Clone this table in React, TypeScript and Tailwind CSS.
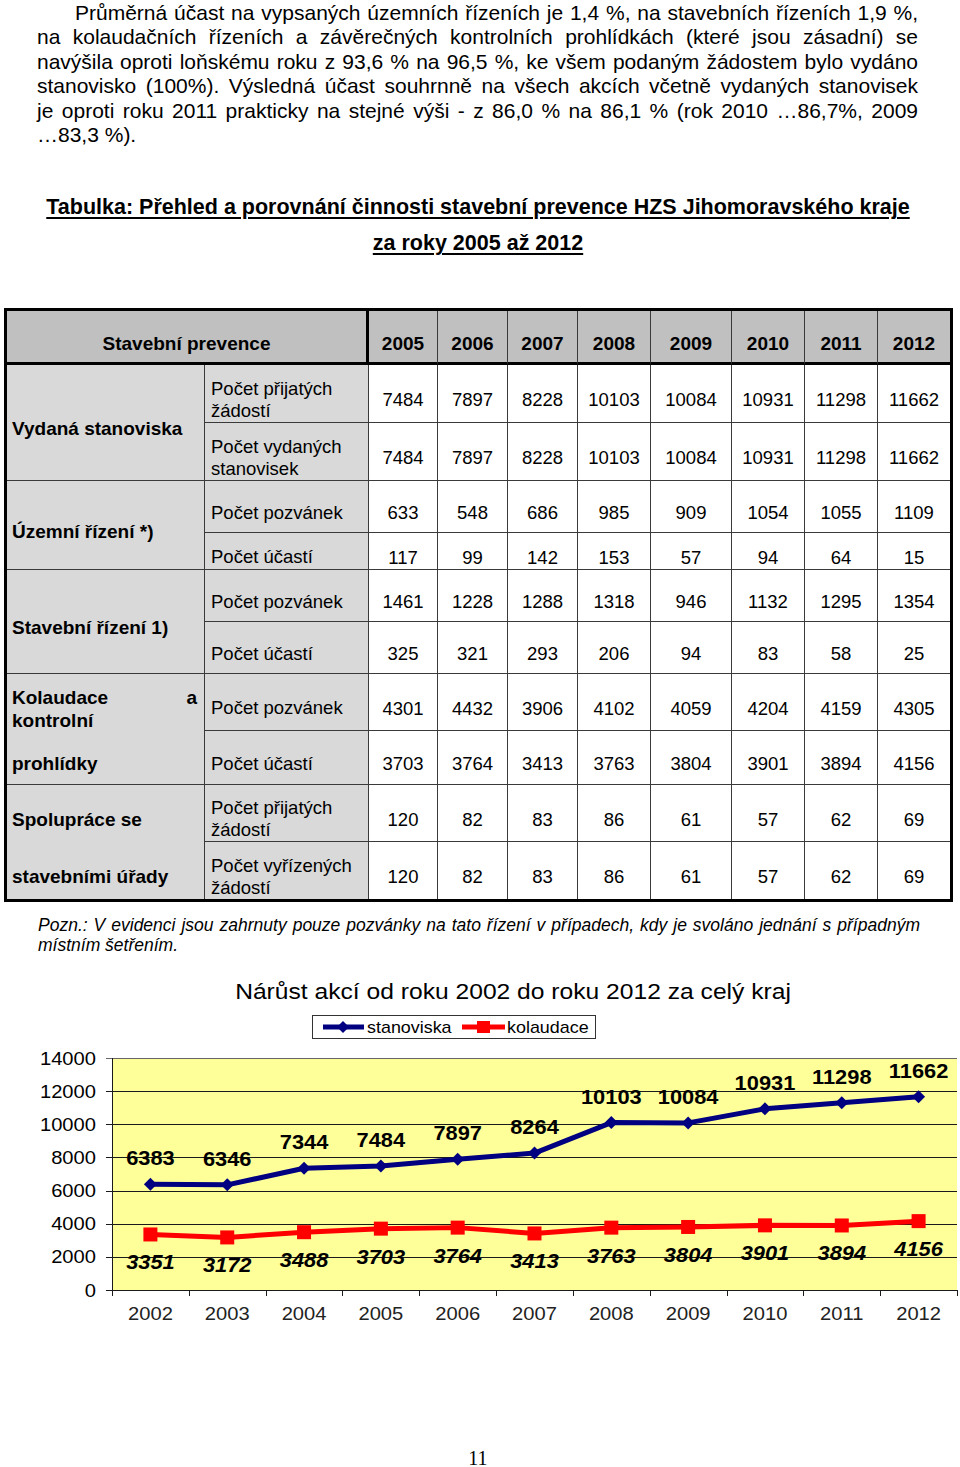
import React from "react";

const years = ["2005", "2006", "2007", "2008", "2009", "2010", "2011", "2012"];

const paraLines = [
  "Průměrná účast na vypsaných územních řízeních je 1,4 %, na stavebních řízeních 1,9 %,",
  "na kolaudačních řízeních a závěrečných kontrolních prohlídkách (které jsou zásadní) se",
  "navýšila oproti loňskému roku z 93,6 % na 96,5 %, ke všem podaným žádostem bylo vydáno",
  "stanovisko (100%). Výsledná účast souhrnně na všech akcích včetně vydaných stanovisek",
  "je oproti roku 2011 prakticky na stejné výši - z 86,0 % na 86,1 % (rok 2010 …86,7%, 2009",
];

type Sub = { s: React.ReactNode; v: string[] };
type Group = { cat: React.ReactNode; split?: [React.ReactNode, React.ReactNode]; subs: Sub[] };

const groups: Group[] = [
  {
    cat: "Vydaná stanoviska",
    subs: [
      { s: <>Počet přijatých<br />žádostí</>, v: ["7484", "7897", "8228", "10103", "10084", "10931", "11298", "11662"] },
      { s: <>Počet vydaných<br />stanovisek</>, v: ["7484", "7897", "8228", "10103", "10084", "10931", "11298", "11662"] },
    ],
  },
  {
    cat: "Územní řízení *)",
    subs: [
      { s: "Počet pozvánek", v: ["633", "548", "686", "985", "909", "1054", "1055", "1109"] },
      { s: "Počet účastí", v: ["117", "99", "142", "153", "57", "94", "64", "15"] },
    ],
  },
  {
    cat: "Stavební řízení 1)",
    subs: [
      { s: "Počet pozvánek", v: ["1461", "1228", "1288", "1318", "946", "1132", "1295", "1354"] },
      { s: "Počet účastí", v: ["325", "321", "293", "206", "94", "83", "58", "25"] },
    ],
  },
  {
    cat: null,
    split: ["Kolaudace a kontrolní", "prohlídky"],
    subs: [
      { s: "Počet pozvánek", v: ["4301", "4432", "3906", "4102", "4059", "4204", "4159", "4305"] },
      { s: "Počet účastí", v: ["3703", "3764", "3413", "3763", "3804", "3901", "3894", "4156"] },
    ],
  },
  {
    cat: null,
    split: ["Spolupráce se", "stavebními úřady"],
    subs: [
      { s: <>Počet přijatých<br />žádostí</>, v: ["120", "82", "83", "86", "61", "57", "62", "69"] },
      { s: <>Počet vyřízených<br />žádostí</>, v: ["120", "82", "83", "86", "61", "57", "62", "69"] },
    ],
  },
];

const stan = [6383, 6346, 7344, 7484, 7897, 8264, 10103, 10084, 10931, 11298, 11662];
const kol = [3351, 3172, 3488, 3703, 3764, 3413, 3763, 3804, 3901, 3894, 4156];
const chartYears = ["2002", "2003", "2004", "2005", "2006", "2007", "2008", "2009", "2010", "2011", "2012"];

const PL = 112;
const PR = 957;
const PB = 1290;
const PT = 1058;
const cw = (PR - PL) / 11;
const xs = (i: number) => PL + cw * (i + 0.5);
const yv = (v: number) => PB - (v * (PB - PT)) / 14000;

function ST({ x, y, size, anchor, weight, italic, fill, children }: { x: number; y: number; size: number; anchor?: "start" | "middle" | "end"; weight?: number; italic?: boolean; fill?: string; children: React.ReactNode }) {
  return (
    <text
      transform={`translate(${x},${y}) scale(1.12,1)`}
      x={0}
      y={0}
      fontSize={size}
      fontFamily="'Liberation Sans', Arial, sans-serif"
      fontWeight={weight ?? 400}
      fontStyle={italic ? "italic" : "normal"}
      textAnchor={anchor ?? "middle"}
      fill={fill ?? "#000"}
    >
      {children}
    </text>
  );
}

function Chart() {
  const stanPts = stan.map((v, i) => `${xs(i)},${yv(v)}`).join(" ");
  const kolPts = kol.map((v, i) => `${xs(i)},${yv(v)}`).join(" ");
  return (
    <svg width={960} height={380} viewBox="0 960 960 380" className="block">
      <ST x={513} y={999} size={22}>Nárůst akcí od roku 2002 do roku 2012 za celý kraj</ST>
      <rect x={312.5} y={1015.5} width={283} height={23} fill="#fff" stroke="#333" strokeWidth={1} />
      <line x1={323} y1={1027} x2={364} y2={1027} stroke="#000080" strokeWidth={5} />
      <polygon points="343,1021 349,1027 343,1033 337,1027" fill="#000080" />
      <ST x={367} y={1033} size={16} anchor="start">stanoviska</ST>
      <line x1={462} y1={1027} x2={505} y2={1027} stroke="#ff0000" strokeWidth={5} />
      <rect x={477} y={1021} width={13} height={12} fill="#ff0000" />
      <ST x={507} y={1033} size={16} anchor="start">kolaudace</ST>
      <rect x={PL} y={PT} width={PR - PL} height={PB - PT} fill="#ffff99" />
      {[0, 2000, 4000, 6000, 8000, 10000, 12000, 14000].map((v) => (
        <g key={v}>
          <line x1={PL - 6} x2={PR} y1={Math.round(yv(v)) + 0.5} y2={Math.round(yv(v)) + 0.5} stroke={v === 14000 ? "#666" : "#1a1a1a"} strokeWidth={1} />
          <ST x={96} y={yv(v) + 6.5} size={18} anchor="end">{v}</ST>
        </g>
      ))}
      <line x1={PL + 0.5} x2={PL + 0.5} y1={PT} y2={PB + 6} stroke="#1a1a1a" strokeWidth={1} />
      {Array.from({ length: 11 }).map((_, i) => (
        <line key={i} x1={Math.round(PL + cw * (i + 1)) + 0.5} x2={Math.round(PL + cw * (i + 1)) + 0.5} y1={PB} y2={PB + 6} stroke="#1a1a1a" strokeWidth={1} />
      ))}
      {chartYears.map((y, i) => (
        <ST key={y} x={xs(i)} y={1319.5} size={18} fill="#222">{y}</ST>
      ))}
      <polyline points={stanPts} fill="none" stroke="#000080" strokeWidth={5} strokeLinejoin="round" />
      {stan.map((v, i) => (
        <polygon key={i} points={`${xs(i)},${yv(v) - 6.5} ${xs(i) + 6.5},${yv(v)} ${xs(i)},${yv(v) + 6.5} ${xs(i) - 6.5},${yv(v)}`} fill="#000080" />
      ))}
      <polyline points={kolPts} fill="none" stroke="#ff0000" strokeWidth={5} strokeLinejoin="round" />
      {kol.map((v, i) => (
        <rect key={i} x={xs(i) - 7} y={yv(v) - 7} width={14} height={14} fill="#ff0000" />
      ))}
      {stan.map((v, i) => (
        <ST key={i} x={xs(i)} y={yv(v) - 19} size={19.5} weight={700}>{v}</ST>
      ))}
      {kol.map((v, i) => (
        <ST key={i} x={xs(i)} y={yv(v) + 35} size={19.5} weight={700} italic>{v}</ST>
      ))}
    </svg>
  );
}

function Table() {
  const cells: React.ReactNode[] = [];
  cells.push(
    <div key="h" className="col-span-2 flex items-center justify-center pt-[14px] bg-[#c0c0c0] border-r-[3px] border-b-[3px] border-black font-bold text-[19px]">
      Stavební prevence
    </div>
  );
  years.forEach((y, i) => {
    cells.push(
      <div key={"y" + y} className={`flex items-center justify-center pt-[14px] bg-[#c0c0c0] border-b-[3px] border-black font-bold text-[19px] ${i < 7 ? "border-r border-r-[#3a3a3a]" : ""}`}>
        {y}
      </div>
    );
  });
  let rowIdx = 0;
  groups.forEach((g, gi) => {
    const lastGroup = gi === groups.length - 1;
    cells.push(
      <div key={"c" + gi} className={`row-span-2 flex flex-col bg-[#d9d9d9] border-r border-[#3a3a3a] font-bold text-[19px] leading-[23px] pl-[5px] pr-[7px] ${lastGroup ? "" : "border-b"}`}>
        {g.split ? (
          <>
            <div className="flex items-center pt-[12px] h-[57px]">
              <div className="w-full text-justify">{g.split[0]}</div>
            </div>
            <div className="flex-1 flex items-center pt-[12px]">
              <div className="w-full">{g.split[1]}</div>
            </div>
          </>
        ) : (
          <div className="flex-1 flex items-center pt-[12px]">{g.cat}</div>
        )}
      </div>
    );
    g.subs.forEach((s, si) => {
      const lastRow = rowIdx === 9;
      cells.push(
        <div key={`s${gi}-${si}`} className={`flex items-center pt-[12px] pl-[6px] bg-[#d9d9d9] border-r border-[#3a3a3a] text-[18.5px] leading-[22px] ${lastRow ? "" : "border-b"}`}>
          <div>{s.s}</div>
        </div>
      );
      s.v.forEach((v, vi) => {
        cells.push(
          <div key={`v${gi}-${si}-${vi}`} className={`flex items-center justify-center pt-[12px] bg-white border-[#3a3a3a] text-[18.5px] ${vi < 7 ? "border-r" : ""} ${lastRow ? "" : "border-b"}`}>
            {v}
          </div>
        );
      });
      rowIdx++;
    });
  });
  return (
    <div className="ml-[4px] w-[949px] border-[3px] border-black">
      <div className="grid grid-cols-[198px_164px_69px_70px_70px_73px_81px_73px_73px_72px] grid-rows-[54px_58px_58px_52px_37px_52px_52px_57px_54px_57px_57px]">
        {cells}
      </div>
    </div>
  );
}

export default function App() {
  return (
    <div className="w-[960px] h-[1467px] bg-white text-black font-['Liberation_Sans',Arial,sans-serif]">
      <div className="pt-[1px] ml-[37px] w-[881px] text-[21px] leading-[24.4px]">
        {paraLines.map((l, i) => (
          <div key={i} className={`text-justify [text-align-last:justify] ${i === 0 ? "pl-[38px]" : ""}`}>
            {l}
          </div>
        ))}
        <div>…83,3 %).</div>
      </div>
      <div className="mt-[42px] text-center font-bold text-[21.5px] leading-[36px] pr-[4px]">
        <div><span className="underline underline-offset-[3px]">Tabulka: Přehled a porovnání činnosti stavební prevence HZS Jihomoravského kraje</span></div>
        <div><span className="underline underline-offset-[3px]">za roky 2005 až 2012</span></div>
      </div>
      <div className="mt-[47px]">
        <Table />
      </div>
      <div className="mt-[13px] ml-[38px] w-[882px] italic text-[17.5px] leading-[20px]">
        <div className="text-justify [text-align-last:justify]">Pozn.: V evidenci jsou zahrnuty pouze pozvánky na tato řízení v případech, kdy je svoláno jednání s případným</div>
        <div>místním šetřením.</div>
      </div>
      <div className="mt-[5px]">
        <Chart />
      </div>
      <div className="mt-[106px] text-center font-['Liberation_Serif','Times_New_Roman',serif] text-[20px] leading-[24px] pr-[4px]">11</div>
    </div>
  );
}
